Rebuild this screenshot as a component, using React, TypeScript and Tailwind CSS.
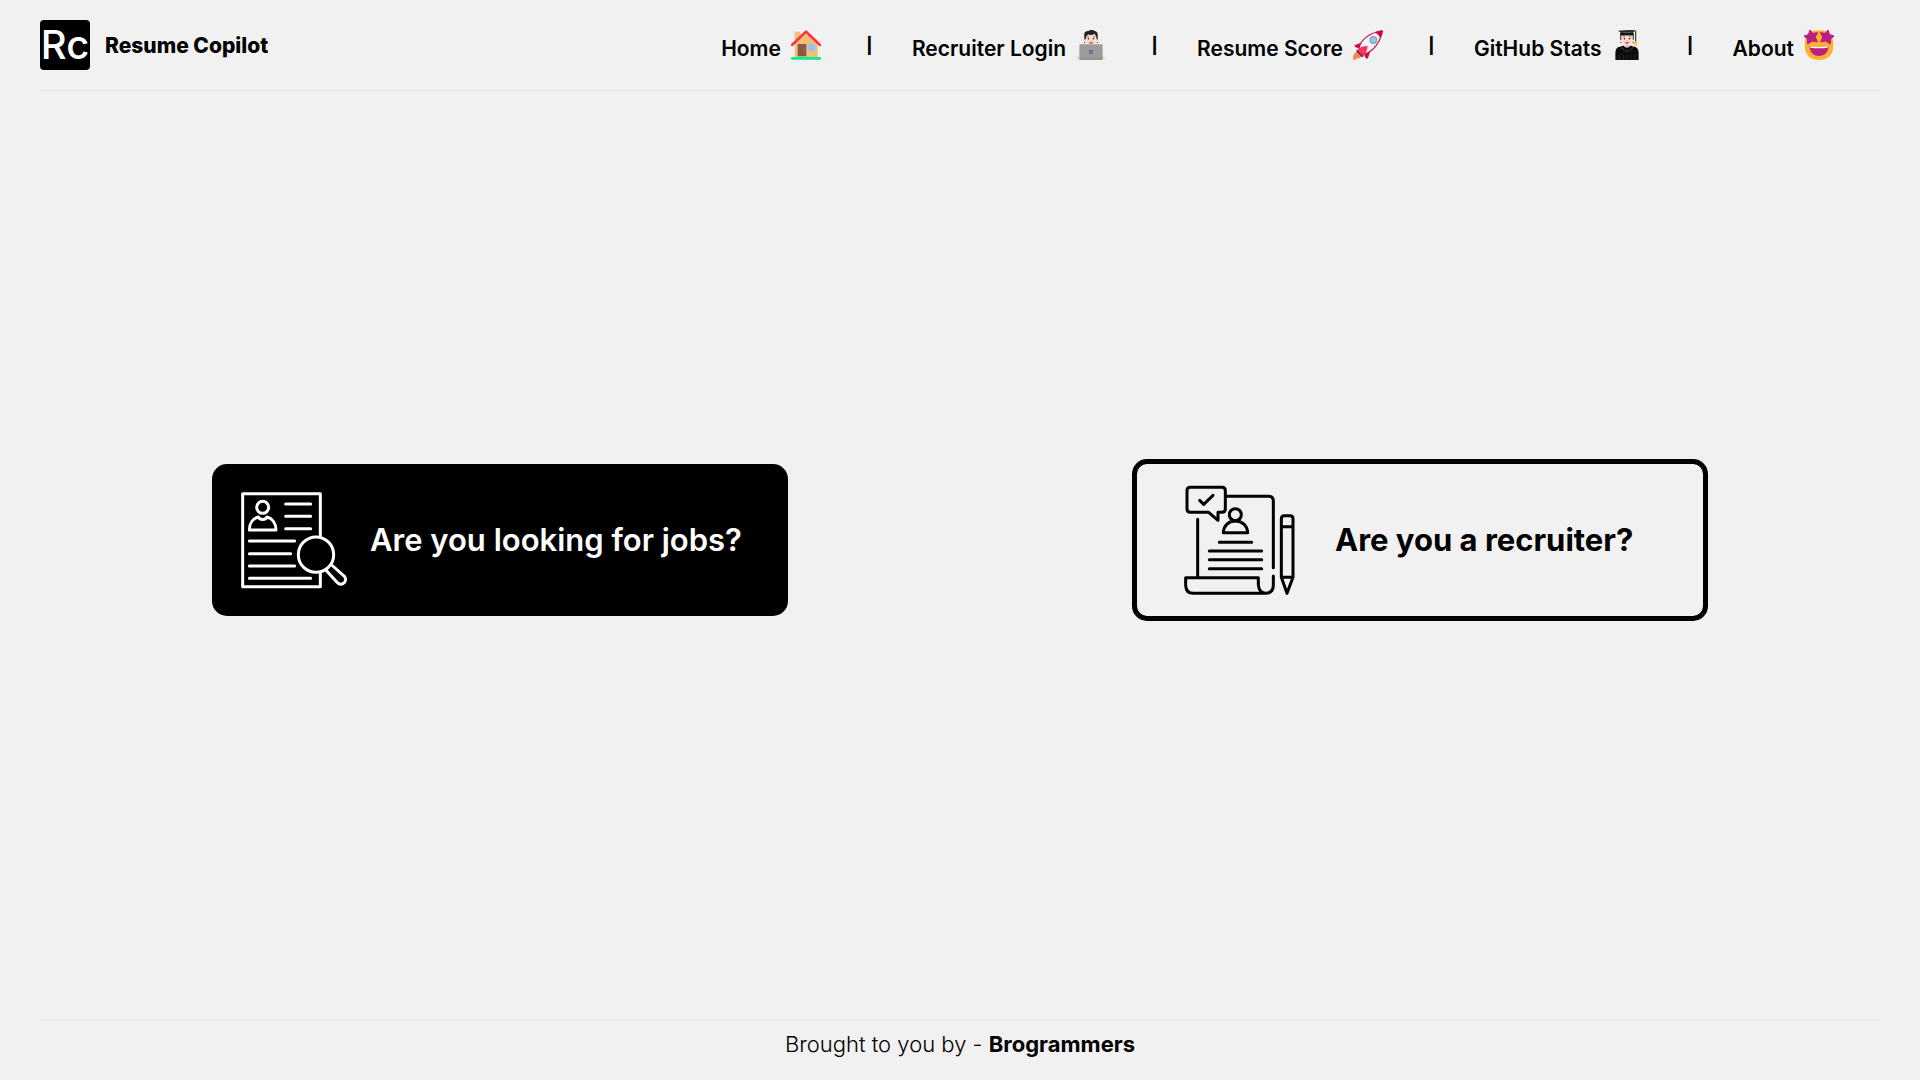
import type { ReactNode } from "react";

function HouseIcon() {
  return (
    <svg viewBox="0 0 90 90" className="size-[30px]" aria-hidden="true">
      <rect x="11" y="5" width="17" height="40" fill="#f3bf78" />
      <path d="M45 8 80 42V83H11V42Z" fill="#f3bf78" />
      <path d="M3 45 45 5 87 45" fill="none" stroke="#ff2f3c" strokeWidth="7.5" strokeLinecap="round" strokeLinejoin="round" />
      <rect x="20" y="42" width="26" height="37" rx="2" fill="#8b5848" />
      <circle cx="40" cy="60" r="2.5" fill="#c08a5c" />
      <rect x="51" y="42" width="21" height="20" rx="2" fill="#88c9fc" />
      <rect x="0" y="81" width="90" height="8" rx="4" fill="#00f08b" />
    </svg>
  );
}

function Face({ hair }: { hair: boolean }) {
  return (
    <g>
      <circle cx="27" cy="30" r="4" fill="#f6c3b0" />
      <circle cx="63" cy="30" r="4" fill="#f6c3b0" />
      <path d="M27 10H63V28C63 40 55 46 45 46S27 40 27 28Z" fill="#ffdccd" />
      {hair && (
        <path d="M24 29V15C24 4 33 2 38 3C42-2 54-1 58 4C66 6 66 12 66 18V29H62V22C60 20 58 16 57 12C50 17 42 17 36 13C34 17 31 19 29 22V29Z" fill="#252529" />
      )}
      <path d="M32 22q4-3 7 0M51 22q4-3 7 0" fill="none" stroke="#54444a" strokeWidth="2" />
      <circle cx="37" cy="27" r="2.4" fill="#222" />
      <circle cx="53" cy="27" r="2.4" fill="#222" />
      <path d="M43 32h4" stroke="#f0a088" strokeWidth="3" />
      <path d="M38 37q7 2 14 0q-2 6-7 6t-7-6Z" fill="#d5305e" />
    </g>
  );
}

function CoderIcon() {
  return (
    <svg viewBox="0 0 90 93" className="size-[30px]" aria-hidden="true">
      <Face hair />
      <circle cx="25" cy="39" r="2" fill="#222" />
      <circle cx="65" cy="39" r="2" fill="#222" />
      <path d="M9 78Q0 79 0 91H90Q90 79 81 78Z" fill="#ffd6c7" />
      <rect x="9" y="44" width="72" height="48" rx="3" fill="#9b9b9b" />
      <path d="M9 90H81" stroke="#7d7d7d" strokeWidth="3" />
      <path d="M39 62h5v5h-5zM46 62h5v5h-5zM39 69h5v5h-5zM46 69h5v5h-5z" fill="#6a4a80" />
    </svg>
  );
}

function RocketIcon() {
  return (
    <svg viewBox="0 0 90 90" className="size-[30px]" aria-hidden="true">
      <path d="M12 66C2 68 0 78 0 89C8 90 12 88 13 85C20 87 26 82 26 76Z" fill="#ff8257" />
      <path d="M30 36L6 45Q3 47 6 51L17 55ZM54 58L45 84Q42 89 38 84L33 72Z" fill="#ca0b4a" />
      <path d="M18 54C24 28 50 8 86 3C84 36 62 62 36 72Z" fill="#f4f4f4" stroke="#ca0b4a" strokeWidth="3.5" strokeLinejoin="round" />
      <path d="M66 7Q76 3 88 1Q91 1 90 5Q88 15 83 24Q76 14 66 7Z" fill="#ca0b4a" />
      <path d="M13 63L28 78" stroke="#533566" strokeWidth="7" strokeLinecap="round" />
      <path d="M12 60L26 50L44 47Q42 66 31 78Z" fill="#f92f60" />
      <circle cx="61" cy="30" r="10" fill="#83cbff" stroke="#9b9b9b" strokeWidth="3.5" />
    </svg>
  );
}

function GraduateIcon() {
  return (
    <svg viewBox="0 0 90 93" className="size-[30px]" aria-hidden="true">
      <path d="M38 40h14v16H38z" fill="#f2bfae" />
      <Face hair={false} />
      <path d="M24 30V10H66V30H63V17H27V30Z" fill="#252529" />
      <path d="M25 6Q45 10 64 6V16Q45 11 25 16Z" fill="#111" />
      <path d="M17 2Q45-1 72 1L65 7Q45 9 24 7Z" fill="#2c2c30" />
      <path d="M72 2V37" stroke="#111" strokeWidth="3" />
      <rect x="67" y="36" width="9" height="12" rx="2" fill="#fcc73a" />
      <circle cx="26" cy="39" r="2" fill="#222" />
      <circle cx="64" cy="39" r="2" fill="#222" />
      <path d="M9 93V70Q9 53 26 51L34 48Q45 62 56 48L64 51Q81 53 81 70V93Z" fill="#0c0c0d" />
      <path d="M27 54Q45 78 63 54" fill="none" stroke="#303034" strokeWidth="4" />
      <path d="M21 74V93M33 74V93M45 74V93M57 74V93M69 74V93" stroke="#2c2c30" strokeWidth="2" />
    </svg>
  );
}

function StarEyesIcon() {
  return (
    <svg viewBox="0 0 90 90" className="size-[30px]" aria-hidden="true">
      <path d="M45 1C76 1 88 20 88 45S76 90 45 90 2 70 2 45 14 1 45 1Z" fill="#ffb02e" />
      <path d="M18 0L26 10L41 8L34 21L40 36L25 33L11 42L10 27L0 18L13 14Z" fill="#bb1d80" stroke="#bb1d80" strokeWidth="3" strokeLinejoin="round" />
      <path d="M72 0L64 10L49 8L56 21L50 36L65 33L79 42L80 27L90 18L77 14Z" fill="#bb1d80" stroke="#bb1d80" strokeWidth="3" strokeLinejoin="round" />
      <path d="M17 49Q45 53 73 49C73 67 62 78 45 78S17 67 17 49Z" fill="#bb1d80" />
      <path d="M19 49Q45 53 71 49V53Q45 57 19 53Z" fill="#fff" />
    </svg>
  );
}

function JobSearchIcon() {
  return (
    <svg viewBox="108 114 336 312" className="h-[104px] w-28 shrink-0" fill="none" stroke="#fff" strokeWidth="9" strokeLinecap="round" strokeLinejoin="round" aria-hidden="true">
      <path d="M361 258V131H128V410H361V368" />
      <circle cx="188" cy="172" r="18" />
      <path d="M148 240H228C228 220 217 205 201 201C196 211 180 211 175 201C159 205 148 220 148 240Z" />
      <path d="M257 162H332M257 199H332M257 236H332M148 273H284M148 311H272M148 348H284M148 385H332" />
      <circle cx="348" cy="314" r="53" />
      <path d="M378 361L411 397C424 411 444 395 434 380L395 345" />
    </svg>
  );
}

function RecruiterIcon() {
  return (
    <svg viewBox="195 102 336 336" className="size-28 shrink-0 overflow-visible" fill="none" stroke="#000" strokeWidth="9" strokeLinecap="round" strokeLinejoin="round" aria-hidden="true">
      <path d="M211 112H306Q316 112 316 122V177Q316 187 306 187H294V211L266 187H211Q201 187 201 177V122Q201 112 211 112Z" />
      <path d="M239 151L251 163L279 136" />
      <path d="M320 139H447Q460 139 460 152V353M233 208V379" />
      <circle cx="346" cy="194" r="18" />
      <path d="M310 248H383C382 226 366 213 346 213S311 226 310 248Z" />
      <path d="M298 277H395M268 303H425M268 329H425M268 356H425" />
      <path d="M197 383H415V404Q417 430 438 430Q460 428 460 406V378M197 383V406Q198 430 220 430H438" />
      <path d="M484 382V206Q484 197 493 197H510Q519 197 519 206V382ZM484 230H519M484 382L501 430L519 382" />
    </svg>
  );
}

const links: { label: string; icon: ReactNode }[] = [
  { label: "Home", icon: <HouseIcon /> },
  { label: "Recruiter Login", icon: <CoderIcon /> },
  { label: "Resume Score", icon: <RocketIcon /> },
  { label: "GitHub Stats", icon: <GraduateIcon /> },
  { label: "About", icon: <StarEyesIcon /> },
];

export default function App() {
  return (
    <div className="flex min-h-screen flex-col bg-[#f1f1f1] px-10 font-['Inter',sans-serif] text-black">
      <header className="flex items-center justify-between border-b border-[#e4e4e9] py-5">
        <a href="#home" className="flex items-center gap-[15px]">
          <span className="flex size-[50px] items-center justify-center overflow-hidden rounded bg-black text-[40px] leading-none font-medium text-white">
            Rc
          </span>
          <span className="pt-0.5 text-[21px] leading-7 font-extrabold">Resume Copilot</span>
        </a>
        <nav className="flex items-center pr-[46px]">
          {links.map((link, i) => (
            <div key={link.label} className="flex items-center">
              {i > 0 && <span className="w-[91px] pl-1.5 text-center text-base font-extrabold">|</span>}
              <a href={`#${link.label.toLowerCase().replace(" ", "-")}`} className="flex items-center gap-2.5">
                <span className="pt-2 text-[21px] leading-7 font-semibold">{link.label}</span>
                {link.icon}
              </a>
            </div>
          ))}
        </nav>
      </header>

      <main className="flex flex-1 items-center justify-around pb-[30px]">
        <a href="#jobs" className="flex w-[30vw] items-center gap-[22px] rounded-[15px] bg-black p-6 text-white">
          <JobSearchIcon />
          <span className="text-[31px] leading-9 font-semibold">Are you looking for jobs?</span>
        </a>
        <a href="#recruiter" className="flex w-[30vw] items-center gap-[38px] rounded-[15px] border-5 border-black px-12 py-5">
          <RecruiterIcon />
          <span className="text-[31px] leading-9 font-bold">Are you a recruiter?</span>
        </a>
      </main>

      <footer className="border-t border-[#e4e4e4] pt-2.5 pb-[22px] text-center text-[22px] leading-7 font-light">
        Brought to you by - <strong className="font-bold">Brogrammers</strong>
      </footer>
    </div>
  );
}
